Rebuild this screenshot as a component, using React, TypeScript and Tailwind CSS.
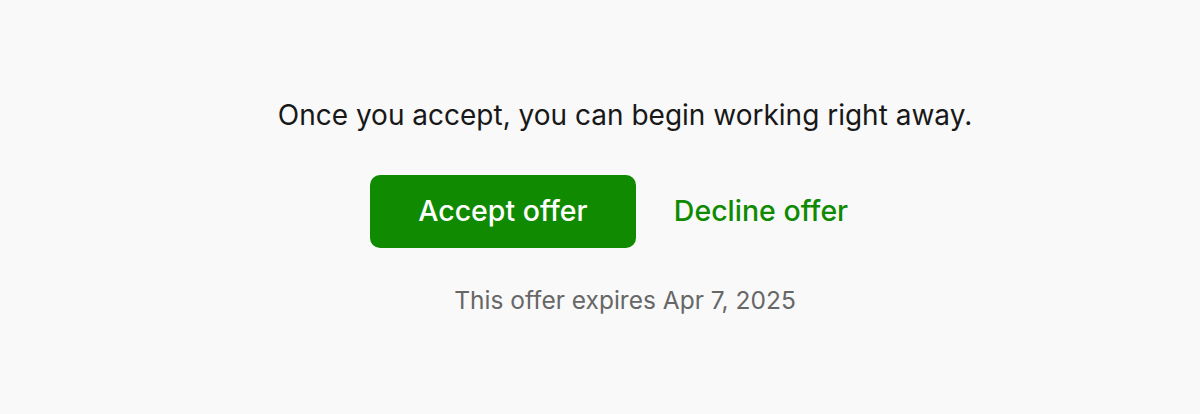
export default function App() {
  return (
    <div
      className="w-[1200px] h-[414px] bg-[#f9f9f9] flex flex-col items-center pl-[50px] pt-[96px]"
      style={{ fontFamily: 'Inter, "Liberation Sans", Arial, sans-serif' }}
    >
      <p className="text-[28px] leading-[38px] text-[#181818]">
        Once you accept, you can begin working right away.
      </p>
      <div className="mt-[41px] flex items-center gap-[38px] pr-[32px]">
        <button className="w-[266px] h-[73px] rounded-[10px] bg-[#108a00] text-white text-[28.5px] font-medium">
          Accept offer
        </button>
        <button className="text-[28.5px] text-[#108a00] font-medium">Decline offer</button>
      </div>
      <p className="mt-[37px] text-[24.5px] leading-[30px] text-[#676767]">
        This offer expires Apr 7, 2025
      </p>
    </div>
  );
}
